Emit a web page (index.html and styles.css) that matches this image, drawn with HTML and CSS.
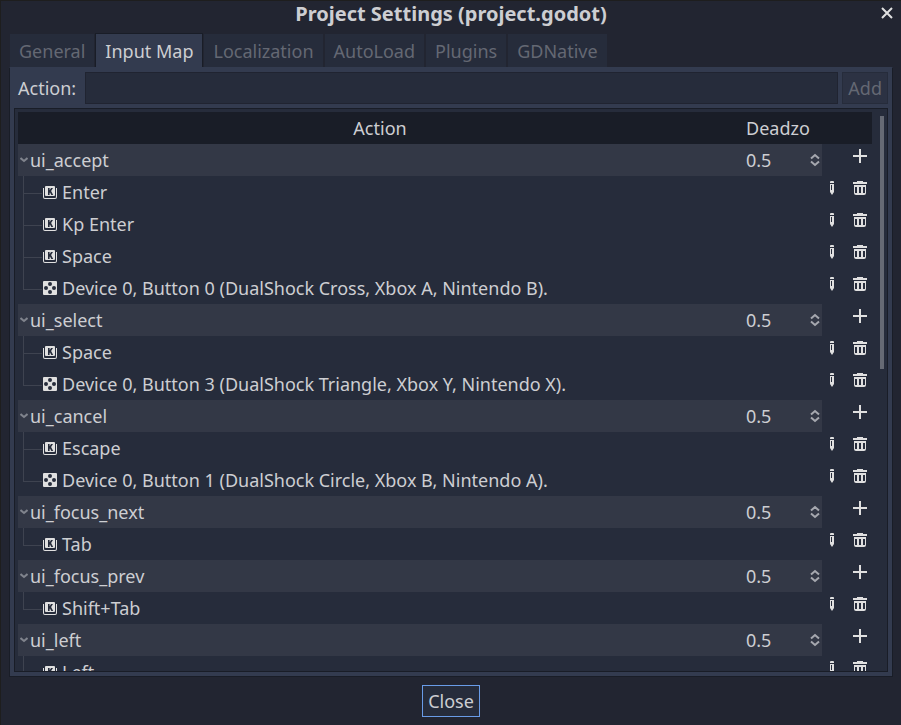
FILE: index.html
```
<!DOCTYPE html>
<html lang="en">
<head>
<meta charset="utf-8">
<title>Project Settings (project.godot)</title>
<link rel="stylesheet" href="styles.css">
</head>
<body>
<svg class="sprites" aria-hidden="true">
  <symbol id="add" viewBox="0 0 16 16"><path d="M7 1v6H1v2h6v6h2V9h6V7H9V1z"/></symbol>
  <symbol id="trash" viewBox="0 0 16 16"><path fill-rule="evenodd" d="M5 1v1H1v2h14V2h-4V1zM2 5v8a2 2 0 0 0 2 2h8a2 2 0 0 0 2-2V5zm1 2h2v6H3zm4 0h2v6H7zm4 0h2v6h-2z"/></symbol>
  <symbol id="edit" viewBox="0 0 16 16"><path fill-rule="evenodd" d="M7 1a1 1 0 0 0-1 1v1h4V2a1 1 0 0 0-1-1zM6 4v8l2 3 2-3V4zm1 1h1v5H7z"/></symbol>
  <symbol id="key" viewBox="0 0 16 16"><path fill-rule="evenodd" d="M4 2a1 1 0 0 0-1 1v8a1 1 0 0 0 1 1h8a1 1 0 0 0 1-1V3a1 1 0 0 0-1-1zM6 4h1.600v2.300L9 4h2L9.100 7l2.100 4H9.300L8 8.400l-.4.600v2H6zM1 4v9a2 2 0 0 0 2 2h10a2 2 0 0 0 2-2V4h-1v9a1 1 0 0 1-1 1H3a1 1 0 0 1-1-1V4z"/></symbol>
  <symbol id="pad" viewBox="0 0 16 16"><path fill-rule="evenodd" d="M2 1a1 1 0 0 0-1 1v12a1 1 0 0 0 1 1h12a1 1 0 0 0 1-1V2a1 1 0 0 0-1-1zm6 1a2 2 0 1 1 0 4 2 2 0 0 1 0-4zM4 6a2 2 0 1 1 0 4 2 2 0 0 1 0-4zm8 0a2 2 0 1 1 0 4 2 2 0 0 1 0-4zm-4 4a2 2 0 1 1 0 4 2 2 0 0 1 0-4z"/></symbol>
  <symbol id="fold" viewBox="0 0 8 6"><path class="stroke" d="M.5 1L4 4l3.500-3"/></symbol>
  <symbol id="spin" viewBox="0 0 10 14"><path class="stroke" d="M1 5.500l4-3.500 4 3.500M1 8.500L5 12l4-3.500"/></symbol>
  <symbol id="close" viewBox="0 0 12 12"><path class="stroke" d="M1 1l10 10M11 1L1 11"/></symbol>
</svg>

<div class="window" role="dialog" aria-labelledby="title">
  <header class="titlebar">
    <h1 id="title">Project Settings (project.godot)</h1>
    <button class="dismiss" aria-label="Close window"><svg><use href="#close"/></svg></button>
  </header>

  <div class="tabs" role="tablist">
    <button class="tab" role="tab">General</button>
    <button class="tab active" role="tab" aria-selected="true">Input Map</button>
    <button class="tab" role="tab">Localization</button>
    <button class="tab" role="tab">AutoLoad</button>
    <button class="tab" role="tab">Plugins</button>
    <button class="tab" role="tab">GDNative</button>
  </div>

  <main class="panel">
    <form class="new-action">
      <label for="action">Action:</label>
      <input id="action" type="text">
      <button type="button" disabled>Add</button>
    </form>
    <div class="tree">
      <table>
        <colgroup><col><col class="col-zone"><col class="col-tools"></colgroup>
        <thead><tr><th>Action</th><th class="zone-head">Deadzo</th><th></th></tr></thead>
        <tbody id="rows"></tbody>
      </table>
      <div class="scrollbar"></div>
    </div>
  </main>

  <footer><button class="confirm">Close</button></footer>
</div>
<script src="rows.js"></script>
</body>
</html>
```
FILE: styles.css
```
* { box-sizing: border-box; }

body {
  margin: 0;
  background: #1e1e1e;
  color: #cdced2;
  font: 18px/24px "Noto Sans", sans-serif;
}

button, input {
  margin: 0;
  padding: 0;
  border: 0;
  border-radius: 0;
  background: none;
  color: inherit;
  font: inherit;
}

svg { display: block; width: 16px; height: 16px; fill: #e0e0e0; }
.sprites { position: absolute; width: 0; height: 0; }
.stroke { fill: none; stroke: currentColor; stroke-width: 2; }

.window {
  display: flex;
  flex-direction: column;
  height: 100vh;
  padding: 0 8px 8px;
  border: 1px solid #1e1e1e;
  border-right: 0;
  border-bottom: 0;
  background: #222531;
}

.titlebar {
  display: flex;
  position: relative;
  justify-content: center;
  height: 32px;
}
h1 { margin: 0; font-size: 20px; line-height: 26px; font-weight: 700; }
.dismiss { position: absolute; top: 6px; right: 0; color: #e0e0e0; }
.dismiss svg { width: 12px; height: 12px; }

.tabs { display: flex; align-items: flex-end; gap: 2px; height: 34px; padding-left: 1px; }
.tab {
  height: 33px;
  padding: 0 9px;
  background: #262c3b;
  color: #646873;
}
.tab.active {
  margin: 0 -1px;
  height: 34px;
  border: 1px solid #191d27;
  border-bottom: 0;
  background: #333b4f;
  color: #cdced2;
}

.panel {
  display: flex;
  flex: 1;
  flex-direction: column;
  gap: 4px;
  min-height: 0;
  padding: 4px;
  border: 1px solid #191d27;
  border-top-color: #333b4f;
  background: #333b4f;
}

.new-action { display: flex; gap: 4px; height: 32px; }
.new-action label { padding: 4px 5px 0 4px; }
.new-action input {
  flex: 1;
  min-width: 0;
  padding: 0 6px;
  border: 1px solid #202431;
  background: #262c3b;
}
.new-action button {
  padding: 0 5px;
  border: 1px solid #262c3b;
  background: #2c3243;
  color: #646873;
}

.tree {
  display: flex;
  flex: 1;
  gap: 8px;
  min-height: 0;
  overflow: hidden;
  padding: 3px 3px 0;
  border: 1px solid #191d27;
  background: #262c3b;
}
table {
  flex: 1;
  border-collapse: collapse;
  table-layout: fixed;
  align-self: flex-start;
}
.col-zone { width: 80px; }
.col-tools { width: 50px; }
tr { height: 32px; }
th, td { padding: 0; text-align: left; font-weight: 400; white-space: nowrap; }
thead { background: #191d27; }
thead th { text-align: center; }
thead .zone-head { padding-left: 4px; text-align: left; }
.group th, .group .zone { background: #333846; }

.name { display: flex; align-items: center; height: 32px; padding-left: 2px; gap: 2px; }
.name svg { width: 8px; height: 6px; color: #80848d; }
.zone > div { display: flex; align-items: center; justify-content: space-between; padding: 0 2px 0 4px; }
.zone input { width: 50px; }
.zone svg { width: 10px; height: 14px; color: #a6a8af; }

.event { display: flex; align-items: center; height: 32px; gap: 4px; }
.branch { align-self: stretch; width: 19px; margin: 0 -4px 0 5px; border-left: 1px solid #3e4350; }
.branch::before { content: ""; display: block; height: 17px; border-bottom: 1px solid #3e4350; }
.last .branch { border-left-color: transparent; }
.last .branch::before { margin-left: -1px; border-left: 1px solid #3e4350; }

.tools { display: flex; justify-content: flex-end; gap: 12px; height: 32px; padding: 4px 4px 0 0; }
.tools button { height: 16px; }

.scrollbar { width: 4px; height: 253px; margin: 4px 0 0; background: #666a74; }

footer { display: flex; justify-content: center; padding-top: 8px; }
.confirm {
  height: 32px;
  padding: 0 5px;
  border: 1px solid #699ce8;
  background: #262c3b;
}
```
FILE: rows.js
```
const actions = [
  ["ui_accept", ["Enter", "Kp Enter", "Space", "Device 0, Button 0 (DualShock Cross, Xbox A, Nintendo B)."]],
  ["ui_select", ["Space", "Device 0, Button 3 (DualShock Triangle, Xbox Y, Nintendo X)."]],
  ["ui_cancel", ["Escape", "Device 0, Button 1 (DualShock Circle, Xbox B, Nintendo A)."]],
  ["ui_focus_next", ["Tab"]],
  ["ui_focus_prev", ["Shift+Tab"]],
  ["ui_left", ["Left"]]
];

const icon = (id) => `<svg><use href="#${id}"/></svg>`;
const tool = (id, label) => `<button aria-label="${label}">${icon(id)}</button>`;

const groupRow = (name) => `
  <tr class="group">
    <th scope="row"><div class="name">${icon("fold")}${name}</div></th>
    <td class="zone"><div><input value="0.5" aria-label="${name} deadzone">${icon("spin")}</div></td>
    <td><div class="tools">${tool("add", "Add event")}</div></td>
  </tr>`;

const eventRow = (text, last) => `
  <tr class="${last ? "last" : ""}">
    <td colspan="2"><div class="event"><span class="branch"></span>${icon(text.startsWith("Device") ? "pad" : "key")}${text}</div></td>
    <td><div class="tools">${tool("edit", "Edit event")}${tool("trash", "Remove event")}</div></td>
  </tr>`;

document.getElementById("rows").innerHTML = actions
  .map(([name, events]) => groupRow(name) + events.map((e, i) => eventRow(e, i === events.length - 1)).join(""))
  .join("");
```
